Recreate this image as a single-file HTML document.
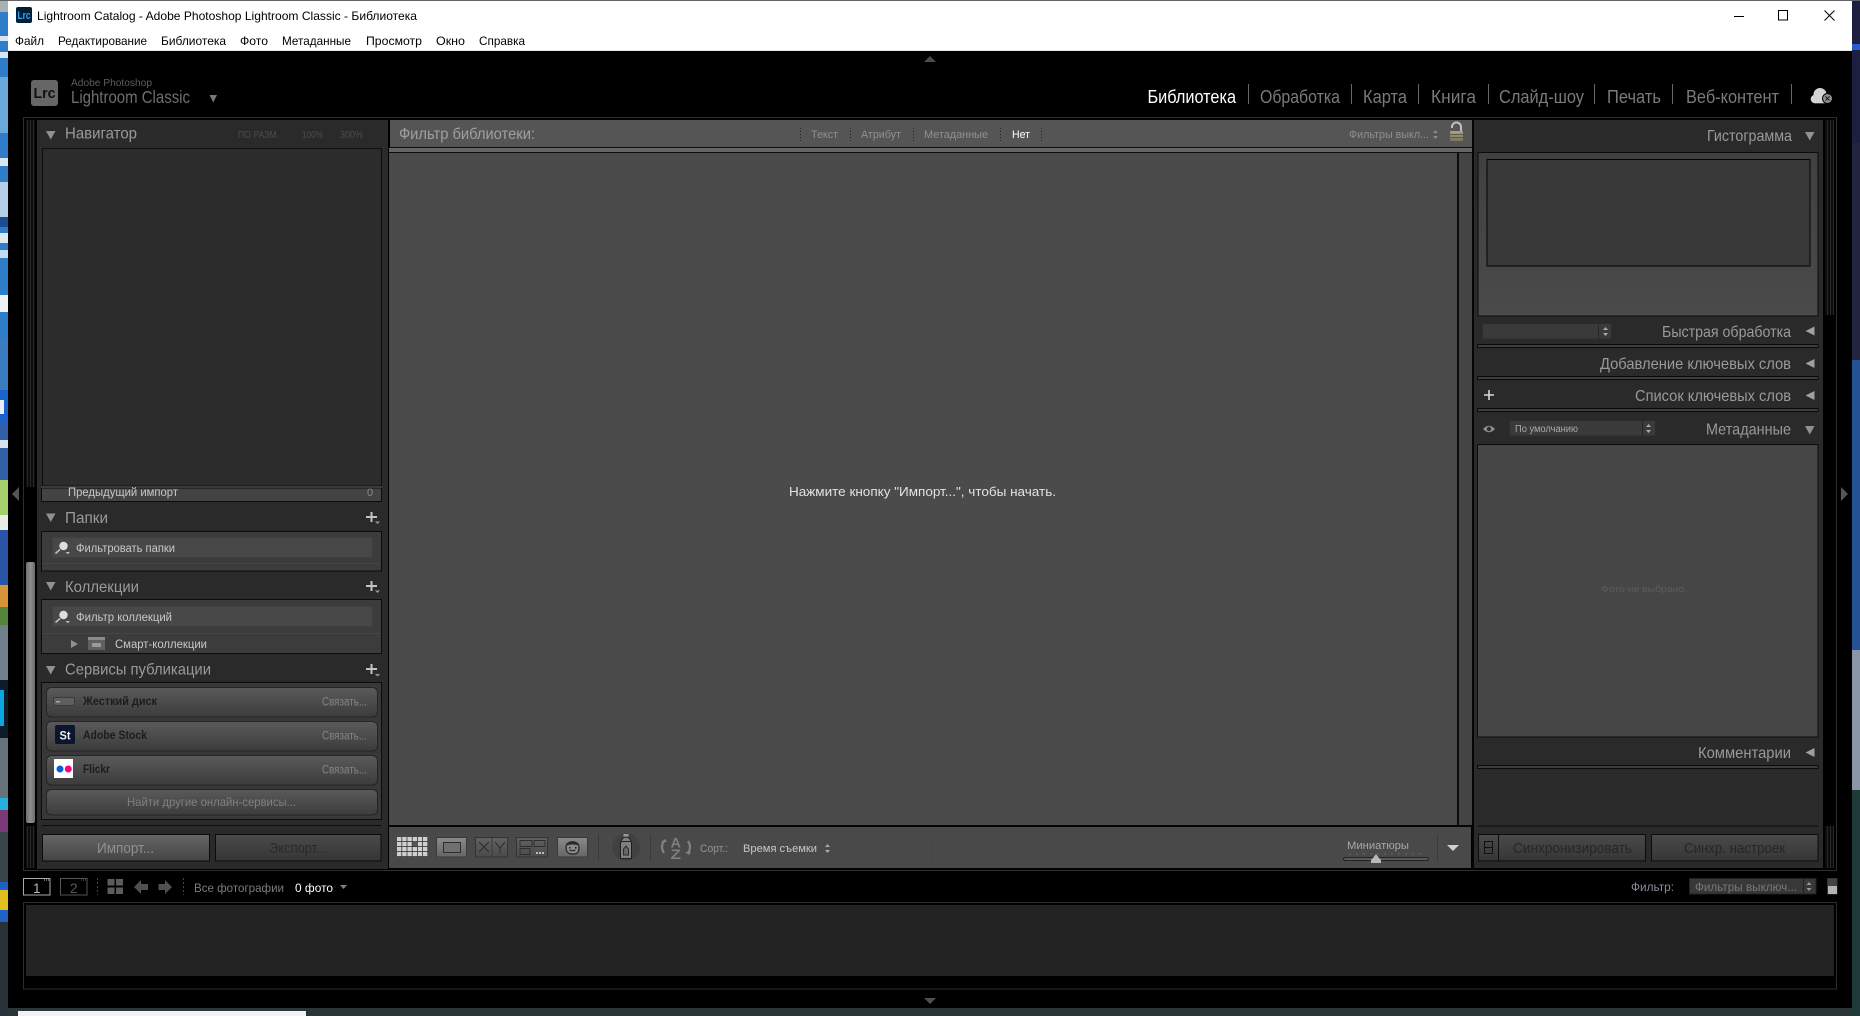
<!DOCTYPE html>
<html lang="ru"><head><meta charset="utf-8"><title>Lightroom Catalog - Adobe Photoshop Lightroom Classic - Библиотека</title>
<style>
html,body{margin:0;padding:0;background:#000;width:1860px;height:1016px;overflow:hidden}
svg{display:block}
text{font-family:"Liberation Sans","DejaVu Sans",sans-serif;white-space:pre}
.m{font-size:12px;fill:#000}
.n{font-size:18px;fill:#7a7a7a}
.h{font-size:16px;fill:#9a9a9a}
.s{font-size:11.5px;fill:#c8c8c8}
.k{font-size:11.500px;fill:#858585}
.d{font-size:12px;fill:#1c1c1c;font-weight:bold}
</style></head><body>
<svg width="1860" height="1016" viewBox="0 0 1860 1016" xmlns="http://www.w3.org/2000/svg">
<defs>
<linearGradient id="btn" x1="0" y1="0" x2="0" y2="1"><stop offset="0" stop-color="#5a5a5a"/><stop offset="1" stop-color="#3c3c3c"/></linearGradient>
<linearGradient id="imp" x1="0" y1="0" x2="0" y2="1"><stop offset="0" stop-color="#666"/><stop offset="1" stop-color="#444"/></linearGradient>
<linearGradient id="exp" x1="0" y1="0" x2="0" y2="1"><stop offset="0" stop-color="#4a4a4a"/><stop offset="1" stop-color="#363636"/></linearGradient>
<linearGradient id="tb" x1="0" y1="0" x2="0" y2="1"><stop offset="0" stop-color="#8a8a8a"/><stop offset="1" stop-color="#666"/></linearGradient>
<linearGradient id="tb2" x1="0" y1="0" x2="0" y2="1"><stop offset="0" stop-color="#626262"/><stop offset="1" stop-color="#4a4a4a"/></linearGradient>
<linearGradient id="thumb" x1="0" y1="0" x2="1" y2="0"><stop offset="0" stop-color="#6e6e6e"/><stop offset=".5" stop-color="#8e8e8e"/><stop offset="1" stop-color="#6a6a6a"/></linearGradient>
<linearGradient id="lock" x1="0" y1="0" x2="0" y2="1"><stop offset="0" stop-color="#a8a488"/><stop offset="1" stop-color="#787458"/></linearGradient>
<pattern id="grip" width="3" height="4" patternUnits="userSpaceOnUse"><rect width="3" height="4" fill="#0c0c0c"/><rect width="1" height="4" fill="#282828"/></pattern>
<linearGradient id="hist" x1="0" y1="0" x2="0" y2="1"><stop offset="0" stop-color="#404040"/><stop offset="1" stop-color="#4a4a4a"/></linearGradient>
</defs>

<!-- desktop strips -->
<rect width="1860" height="1016" fill="#1f2e33"/>
<rect x="0" y="0" width="8" height="340" fill="#2f7cc8"/>
<rect x="0" y="0" width="8" height="12" fill="#a9b0b6"/>
<rect x="0" y="36" width="8" height="5" fill="#d8e6f2"/>
<rect x="0" y="52" width="8" height="6" fill="#d8e6f2"/>
<rect x="0" y="77" width="8" height="56" fill="#6aa8dc"/>
<rect x="0" y="158" width="8" height="8" fill="#d8e6f2"/>
<rect x="0" y="182" width="8" height="35" fill="#b4d0e8"/>
<rect x="0" y="217" width="8" height="10" fill="#1c4c90"/>
<rect x="0" y="233" width="8" height="10" fill="#dce8f2"/>
<rect x="0" y="250" width="8" height="8" fill="#c4dcf0"/>
<rect x="0" y="295" width="8" height="17" fill="#eef2f6"/>
<rect x="0" y="340" width="8" height="50" fill="#3a7cc0"/>
<rect x="0" y="390" width="8" height="34" fill="#1a62cc"/>
<rect x="0" y="400" width="4" height="14" fill="#e8eef4"/>
<rect x="0" y="424" width="8" height="56" fill="#2f5fa4"/>
<rect x="0" y="440" width="8" height="8" fill="#d8e2ee"/>
<rect x="0" y="480" width="8" height="40" fill="#a6cf6e"/>
<rect x="0" y="515" width="8" height="15" fill="#e9efe6"/>
<rect x="0" y="530" width="8" height="55" fill="#2a55a6"/>
<rect x="0" y="585" width="8" height="22" fill="#d8943a"/>
<rect x="0" y="607" width="8" height="18" fill="#55853a"/>
<rect x="0" y="625" width="8" height="55" fill="#72808e"/>
<rect x="0" y="680" width="8" height="58" fill="#0d1b2a"/>
<rect x="0" y="690" width="4" height="36" fill="#0aa7e0"/>
<rect x="0" y="738" width="8" height="60" fill="#66717c"/>
<rect x="0" y="798" width="8" height="12" fill="#27aee0"/>
<rect x="0" y="810" width="8" height="22" fill="#7a3a78"/>
<rect x="0" y="832" width="8" height="50" fill="#39454a"/>
<rect x="0" y="882" width="8" height="40" fill="#1d62c4"/>
<rect x="0" y="890" width="8" height="20" fill="#e0c020"/>
<rect x="0" y="922" width="8" height="94" fill="#283238"/>
<rect x="1852" y="0" width="8" height="143" fill="#1c1f40"/>
<rect x="1852" y="44" width="8" height="6" fill="#2a5ad0"/>
<rect x="1852" y="143" width="8" height="217" fill="#23243f"/>
<rect x="1852" y="360" width="8" height="290" fill="#245294"/>
<rect x="1852" y="650" width="8" height="140" fill="#8a96a8"/>
<rect x="1852" y="790" width="8" height="226" fill="#1e3a38"/>
<rect x="8" y="1008" width="1844" height="8" fill="#2a3538"/>
<rect x="18" y="1011" width="288" height="5" fill="#f2f2f2"/>
<rect x="0" y="0" width="1860" height="1" fill="#606468"/>

<!-- window -->
<rect x="8" y="51" width="1844" height="957" fill="#000"/>
<rect x="8" y="1" width="1844" height="50" fill="#fff"/>
<rect x="8" y="50" width="1844" height="1" fill="#e8e8e8"/>
<rect x="16" y="7" width="16" height="16" rx="2" fill="#001e36"/>
<text x="17.5" y="19" font-size="11" font-weight="bold" fill="#31a8ff" textLength="13" lengthAdjust="spacingAndGlyphs">Lrc</text>
<text x="37" y="20" class="m" textLength="380" lengthAdjust="spacingAndGlyphs">Lightroom Catalog - Adobe Photoshop Lightroom Classic - Библиотека</text>
<text x="15" y="45" class="m" textLength="29" lengthAdjust="spacingAndGlyphs">Файл</text>
<text x="58" y="45" class="m" textLength="89" lengthAdjust="spacingAndGlyphs">Редактирование</text>
<text x="161" y="45" class="m" textLength="65" lengthAdjust="spacingAndGlyphs">Библиотека</text>
<text x="240" y="45" class="m" textLength="28" lengthAdjust="spacingAndGlyphs">Фото</text>
<text x="282" y="45" class="m" textLength="69" lengthAdjust="spacingAndGlyphs">Метаданные</text>
<text x="366" y="45" class="m" textLength="56" lengthAdjust="spacingAndGlyphs">Просмотр</text>
<text x="436" y="45" class="m" textLength="29" lengthAdjust="spacingAndGlyphs">Окно</text>
<text x="479" y="45" class="m" textLength="46" lengthAdjust="spacingAndGlyphs">Справка</text>
<path d="M1734 16.5h10" stroke="#000" stroke-width="1" fill="none"/>
<rect x="1778.5" y="10.5" width="9" height="9.5" fill="none" stroke="#000"/>
<path d="M1824.5 10.5l10 10M1834.5 10.5l-10 10" stroke="#000" fill="none"/>

<!-- top bar -->
<path d="M924 62l6-6 6 6z" fill="#4c4c4c"/>
<rect x="31" y="80" width="27" height="26" rx="3" fill="#666"/>
<text x="33.5" y="98" font-size="15" font-weight="bold" fill="#111" textLength="22" lengthAdjust="spacingAndGlyphs">Lrc</text>
<text x="71" y="86" font-size="10.5" fill="#5e5e5e" textLength="81" lengthAdjust="spacingAndGlyphs">Adobe Photoshop</text>
<text x="71" y="103" font-size="17.5" fill="#6e6e6e" textLength="119" lengthAdjust="spacingAndGlyphs">Lightroom Classic</text>
<path d="M209.5 95h7.500l-3.750 7.500z" fill="#777"/>
<text x="1147.500" y="103" class="n" style="fill:#fff" textLength="88.500" lengthAdjust="spacingAndGlyphs">Библиотека</text>
<text x="1260" y="103" class="n" textLength="80" lengthAdjust="spacingAndGlyphs">Обработка</text>
<text x="1363" y="103" class="n" textLength="44" lengthAdjust="spacingAndGlyphs">Карта</text>
<text x="1431" y="103" class="n" textLength="45" lengthAdjust="spacingAndGlyphs">Книга</text>
<text x="1499" y="103" class="n" textLength="85" lengthAdjust="spacingAndGlyphs">Слайд-шоу</text>
<text x="1607" y="103" class="n" textLength="54" lengthAdjust="spacingAndGlyphs">Печать</text>
<text x="1686" y="103" class="n" textLength="93" lengthAdjust="spacingAndGlyphs">Веб-контент</text>
<path d="M1248.500 84v20M1351.500 84v20M1418.500 84v20M1488.500 84v20M1594.500 84v20M1672.500 84v20M1791.500 84v20" stroke="#666" fill="none"/>
<circle cx="1820" cy="94.500" r="6.500" fill="#d4d4d4"/><circle cx="1815" cy="99" r="4.300" fill="#d4d4d4"/><rect x="1815" y="97" width="12" height="6.300" fill="#d4d4d4"/>
<circle cx="1827.500" cy="98.500" r="5" fill="#8e8e8e" stroke="#000"/>
<path d="M1825.500 96.500l4 4M1829.500 96.500l-4 4" stroke="#1c1c1c" fill="none"/>

<!-- main frame -->
<rect x="23.500" y="117.500" width="1813" height="753" fill="#000" stroke="#2e2e2e"/>

<!-- left panel -->
<rect x="26" y="120" width="9" height="367" fill="url(#grip)"/>
<rect x="26" y="562" width="9" height="261" rx="2" fill="url(#thumb)"/>
<rect x="26" y="826" width="9" height="42" fill="url(#grip)"/>
<path d="M19 487v14l-7-7z" fill="#555"/>
<rect x="37" y="120" width="351.500" height="749" fill="#2a2a2a"/>
<rect x="388" y="119" width="2" height="751" fill="#000"/>
<path d="M46 131h9.500l-4.750 8.500z" fill="#919191"/>
<text x="65" y="138.500" class="h" textLength="72" lengthAdjust="spacingAndGlyphs">Навигатор</text>
<text x="238" y="138" font-size="10" fill="#4c4c4c" textLength="41" lengthAdjust="spacingAndGlyphs">ПО РАЗМ.</text>
<text x="302" y="138" font-size="10" fill="#4c4c4c" textLength="21" lengthAdjust="spacingAndGlyphs">100%</text>
<text x="340" y="138" font-size="10" fill="#4c4c4c" textLength="23" lengthAdjust="spacingAndGlyphs">300%</text>
<rect x="42.500" y="148.500" width="339" height="337.500" fill="#2c2c2c" stroke="#0e0e0e"/>
<rect x="41.500" y="488" width="340" height="13.500" fill="#434343" stroke="#0c0c0c" stroke-width="1"/>
<rect x="41" y="486" width="341" height="2" fill="#3a3a3a"/>
<text x="68" y="496" class="s" textLength="110" lengthAdjust="spacingAndGlyphs">Предыдущий импорт</text>
<text x="367" y="496" font-size="11" fill="#8a8a8a">0</text>

<!-- folders -->
<path d="M46 513.500h9.500l-4.750 8.500z" fill="#919191"/>
<text x="65" y="523" class="h" textLength="43" lengthAdjust="spacingAndGlyphs">Папки</text>
<path d="M371.500 512v10M366 517h11" stroke="#c4c4c4" stroke-width="2" fill="none"/>
<path d="M375 521.500h5l-2.500 2.500z" fill="#999"/>
<rect x="41.500" y="531.500" width="340" height="39.500" fill="#3c3c3c" stroke="#0c0c0c"/>
<rect x="52.500" y="537.500" width="319.500" height="20" fill="#484848" stroke="#404040"/>
<circle cx="63.500" cy="546" r="4.200" fill="#ddd"/><path d="M60 549.500l-4.500 4" stroke="#bbb" stroke-width="1.700" fill="none"/>
<path d="M65.500 552h4.500l-2.250 2.250z" fill="#bbb"/>
<text x="76" y="552" class="s" textLength="99" lengthAdjust="spacingAndGlyphs">Фильтровать папки</text>
<path d="M42 563.500h339" stroke="#454545" fill="none"/>

<!-- collections -->
<path d="M46 582h9.500l-4.750 8.500z" fill="#919191"/>
<text x="65" y="592" class="h" textLength="74" lengthAdjust="spacingAndGlyphs">Коллекции</text>
<path d="M371.500 581v10M366 586h11" stroke="#c4c4c4" stroke-width="2" fill="none"/>
<path d="M375 590.500h5l-2.500 2.500z" fill="#999"/>
<rect x="41.500" y="599.500" width="340" height="54" fill="#3c3c3c" stroke="#0c0c0c"/>
<rect x="52.500" y="606.500" width="319.500" height="20" fill="#484848" stroke="#404040"/>
<circle cx="63.500" cy="615" r="4.200" fill="#ddd"/><path d="M60 618.500l-4.500 4" stroke="#bbb" stroke-width="1.700" fill="none"/>
<path d="M65.500 621h4.500l-2.250 2.250z" fill="#bbb"/>
<text x="76" y="621" class="s" textLength="96" lengthAdjust="spacingAndGlyphs">Фильтр коллекций</text>
<path d="M42 633.500h339" stroke="#464646" fill="none"/>
<path d="M71 640v8l7-4z" fill="#909090"/>
<rect x="88" y="637" width="17" height="4" fill="#8a8a8a"/><rect x="88" y="640" width="17" height="10" fill="#606060"/><rect x="92" y="643" width="9" height="4" fill="#9a9a9a"/>
<text x="115" y="648" class="s" textLength="92" lengthAdjust="spacingAndGlyphs">Смарт-коллекции</text>

<!-- publish services -->
<path d="M46 666h9.500l-4.750 8.500z" fill="#919191"/>
<text x="65" y="674.500" class="h" textLength="146" lengthAdjust="spacingAndGlyphs">Сервисы публикации</text>
<path d="M371.500 664v10M366 669h11" stroke="#c4c4c4" stroke-width="2" fill="none"/>
<path d="M375 674h5l-2.500 2.500z" fill="#999"/>
<rect x="41.500" y="682.500" width="340" height="137" fill="#383838" stroke="#0c0c0c"/>
<rect x="46.500" y="687.500" width="331" height="29.500" rx="5" fill="url(#btn)" stroke="#252525"/>
<rect x="46.500" y="721.500" width="331" height="29.500" rx="5" fill="url(#btn)" stroke="#252525"/>
<rect x="46.500" y="755.500" width="331" height="29.500" rx="5" fill="url(#btn)" stroke="#252525"/>
<rect x="46.500" y="789.500" width="331" height="25.500" rx="5" fill="url(#btn)" stroke="#252525"/>
<rect x="53.500" y="697.500" width="21" height="8" rx="1.500" fill="#5e5e5e" stroke="#3a3a3a"/><rect x="56" y="701" width="4" height="1.500" fill="#aaa"/>
<text x="83" y="705" class="d" textLength="74" lengthAdjust="spacingAndGlyphs">Жесткий диск</text>
<text x="322" y="705.500" class="k" textLength="45" lengthAdjust="spacingAndGlyphs">Связать...</text>
<rect x="55" y="725" width="20" height="19" rx="2" fill="#0a1530"/>
<text x="59.500" y="739.500" font-size="12" font-weight="bold" fill="#eee" textLength="11" lengthAdjust="spacingAndGlyphs">St</text>
<text x="83" y="739" class="d" textLength="64" lengthAdjust="spacingAndGlyphs">Adobe Stock</text>
<text x="322" y="739.500" class="k" textLength="45" lengthAdjust="spacingAndGlyphs">Связать...</text>
<rect x="54" y="759" width="19" height="19" fill="#fff"/>
<circle cx="60" cy="769" r="3.500" fill="#0063dc"/><circle cx="68.300" cy="769" r="3.500" fill="#ff0084"/>
<text x="83" y="773" class="d" textLength="27" lengthAdjust="spacingAndGlyphs">Flickr</text>
<text x="322" y="773.500" class="k" textLength="45" lengthAdjust="spacingAndGlyphs">Связать...</text>
<text x="127" y="806" font-size="12" fill="#808080" textLength="169" lengthAdjust="spacingAndGlyphs">Найти другие онлайн-сервисы...</text>
<path d="M42 825.500h339" stroke="#0c0c0c" fill="none"/>
<rect x="42.500" y="834.500" width="167" height="26.500" fill="url(#imp)" stroke="#0c0c0c"/>
<rect x="215.500" y="834.500" width="165.500" height="26.500" fill="url(#exp)" stroke="#0c0c0c"/>
<text x="97" y="853" font-size="15" fill="#909090" textLength="57" lengthAdjust="spacingAndGlyphs">Импорт...</text>
<text x="269" y="853" font-size="15" fill="#2a2a2a" textLength="58" lengthAdjust="spacingAndGlyphs">Экспорт...</text>

<!-- center -->
<rect x="390" y="120" width="1082" height="27" fill="#555"/>
<rect x="389" y="147" width="1083" height="1" fill="#0e0e0e"/>
<rect x="389" y="148" width="1083" height="4" fill="#666"/>
<rect x="389" y="152" width="1083" height="1" fill="#0e0e0e"/>
<rect x="389" y="153" width="1068" height="672" fill="#4b4b4b"/>
<rect x="1457" y="153" width="2" height="672" fill="#0c0c0c"/>
<rect x="1459" y="153" width="13" height="672" fill="#444"/>
<rect x="389" y="825" width="1083" height="2" fill="#050505"/>
<rect x="389" y="827" width="1082" height="41" fill="#494949"/>
<text x="399" y="139" class="h" style="fill:#a0a0a0" textLength="136" lengthAdjust="spacingAndGlyphs">Фильтр библиотеки:</text>
<text x="811" y="138" font-size="11" fill="#909090" textLength="27" lengthAdjust="spacingAndGlyphs">Текст</text>
<text x="861" y="138" font-size="11" fill="#909090" textLength="40" lengthAdjust="spacingAndGlyphs">Атрибут</text>
<text x="924" y="138" font-size="11" fill="#909090" textLength="64" lengthAdjust="spacingAndGlyphs">Метаданные</text>
<text x="1012" y="138" font-size="11" fill="#fff" textLength="18" lengthAdjust="spacingAndGlyphs">Нет</text>
<path d="M800.500 128v14M850.500 128v14M913.500 128v14M1000.500 128v14M1041.500 128v14" stroke="#222" stroke-dasharray="1 2" fill="none"/>
<text x="1349" y="138" font-size="11" fill="#909090" textLength="80" lengthAdjust="spacingAndGlyphs">Фильтры выкл...</text>
<path d="M1433 133l2.500-3 2.500 3zM1433 136l2.500 3 2.500-3z" fill="#8a8a8a"/>
<path d="M1452 128v-1a4.500 4.500 0 0 1 9 0v5" fill="none" stroke="#c0c0c0" stroke-width="2"/>
<rect x="1450" y="131" width="13" height="10" rx="1" fill="url(#lock)"/>
<path d="M1450 134.500h13M1450 137.500h13" stroke="#5e5a44" fill="none"/>
<text x="789" y="496" font-size="13" fill="#e2e2e2" textLength="267" lengthAdjust="spacingAndGlyphs">Нажмите кнопку "Импорт...", чтобы начать.</text>

<!-- toolbar -->
<rect x="397" y="837" width="31" height="20" fill="#333"/>
<g fill="#cfcfcf">
<rect x="397" y="837" width="4.400" height="4.200"/><rect x="402.200" y="837" width="4.400" height="4.200"/><rect x="407.400" y="837" width="4.400" height="4.200"/><rect x="412.600" y="837" width="4.400" height="4.200"/><rect x="417.800" y="837" width="4.400" height="4.200"/><rect x="423" y="837" width="4.400" height="4.200"/>
<rect x="397" y="842" width="4.400" height="4.200"/><rect x="402.200" y="842" width="4.400" height="4.200"/><rect x="407.400" y="842" width="4.400" height="4.200"/><rect x="412.600" y="842" width="4.400" height="4.200" fill="#555"/><rect x="417.800" y="842" width="4.400" height="4.200"/><rect x="423" y="842" width="4.400" height="4.200"/>
<rect x="397" y="847" width="4.400" height="4.200"/><rect x="402.200" y="847" width="4.400" height="4.200"/><rect x="407.400" y="847" width="4.400" height="4.200"/><rect x="412.600" y="847" width="4.400" height="4.200"/><rect x="417.800" y="847" width="4.400" height="4.200"/><rect x="423" y="847" width="4.400" height="4.200"/>
<rect x="397" y="852" width="4.400" height="4.200"/><rect x="402.200" y="852" width="4.400" height="4.200"/><rect x="407.400" y="852" width="4.400" height="4.200"/><rect x="412.600" y="852" width="4.400" height="4.200"/><rect x="417.800" y="852" width="4.400" height="4.200"/><rect x="423" y="852" width="4.400" height="4.200"/>
</g>
<rect x="436.500" y="837.500" width="30" height="19.500" fill="url(#tb)" stroke="#3a3a3a"/>
<rect x="443.500" y="842.500" width="17" height="10" fill="#707070" stroke="#2e2e2e"/>
<rect x="475.500" y="837.500" width="32" height="19.500" fill="url(#tb2)" stroke="#333"/>
<path d="M492 838v19" stroke="#3a3a3a" fill="none"/>
<path d="M479 842l10 10M489 842l-10 10" stroke="#2b2b2b" fill="none"/>
<path d="M495 842l5 6 5-6M500 848v5" stroke="#2b2b2b" fill="none"/>
<rect x="516.500" y="837.500" width="31" height="19.500" fill="url(#tb2)" stroke="#333"/>
<path d="M520 840.500h12v6h-12zM534 840.500h11v6h-11zM520 848.500h10v6h-10z" fill="none" stroke="#2e2e2e"/>
<rect x="536" y="852" width="2" height="2" fill="#bbb"/><rect x="539" y="852" width="2" height="2" fill="#bbb"/><rect x="542" y="852" width="2" height="2" fill="#bbb"/>
<rect x="557.500" y="837.500" width="30" height="19.500" fill="url(#tb)" stroke="#3a3a3a"/>
<path d="M566 847c0-7 13-7 13 0s-3 7-6.500 7-6.500-1-6.500-7z" fill="#8a8a8a" stroke="#222" stroke-width="1.200"/>
<path d="M566 846c2-5 11-5 13 0-3-2-10-2-13 0z" fill="#2c2c2c"/>
<path d="M569.500 850q3 1.500 6 0" stroke="#222" fill="none"/>
<rect x="569" y="847" width="1.500" height="1.500" fill="#222"/><rect x="575" y="847" width="1.500" height="1.500" fill="#222"/>
<path d="M598.500 834v27M650.500 834v27" stroke="#3a3a3a" fill="none"/>
<circle cx="626" cy="847" r="14" fill="#414141"/>
<rect x="623.500" y="834" width="5" height="3" fill="#999"/>
<path d="M620.500 844c0-4 2.500-7 5.500-7s5.500 3 5.500 7v14.500h-11z" fill="#808080" stroke="#1e1e1e"/>
<path d="M621 841.500h10" stroke="#222" fill="none"/>
<path d="M623.500 849l2.500-3 2.500 3v6h-5z" fill="#666" stroke="#2a2a2a"/>
<text x="670.500" y="847.500" font-size="14" font-weight="bold" fill="#7e7e7e" textLength="10.500" lengthAdjust="spacingAndGlyphs">A</text>
<text x="670.500" y="859" font-size="14" font-weight="bold" fill="#7e7e7e" textLength="10.500" lengthAdjust="spacingAndGlyphs">Z</text>
<path d="M664 841q-4 6 0 12M688 841q4 6 0 12" stroke="#808080" stroke-width="2.200" fill="none"/>
<path d="M661 842h6l-2-3zM685 852h6l-2 3z" fill="#808080"/>
<text x="700" y="852" font-size="11" fill="#8b949c" textLength="28" lengthAdjust="spacingAndGlyphs">Сорт.:</text>
<text x="743" y="852" font-size="11" fill="#c4c8cc" textLength="74" lengthAdjust="spacingAndGlyphs">Время съемки</text>
<path d="M825 847l2.500-3 2.500 3zM825 850l2.500 3 2.500-3z" fill="#aaa"/>
<path d="M931.500 836v26" stroke="#444" fill="none"/>
<text x="1347" y="849" font-size="11" fill="#a8a8a8" textLength="62" lengthAdjust="spacingAndGlyphs">Миниатюры</text>
<path d="M1350 853v2M1357 853v2M1364 853v2M1371 853v2M1378 853v2M1385 853v2M1392 853v2M1399 853v2M1406 853v2M1413 853v2M1420 853v2" stroke="#666" fill="none"/>
<rect x="1343.500" y="857.500" width="85" height="3" rx="1.500" fill="#5a5a5a" stroke="#222"/>
<path d="M1376 854l3 4 2 2v3h-10v-3l2-2z" fill="#b8b8b8"/>
<path d="M1437.500 834v28" stroke="#3a3a3a" fill="none"/>
<path d="M1447 845h12l-6 6z" fill="#cfcfcf"/>

<!-- right panel -->
<rect x="1472" y="119" width="2" height="751" fill="#050505"/>
<rect x="1474" y="120" width="349" height="748" fill="#2a2a2a"/>
<rect x="1825" y="120" width="9" height="195" fill="url(#grip)"/>
<rect x="1825" y="826" width="9" height="42" fill="url(#grip)"/>
<path d="M1841 487v14l7-7z" fill="#555"/>
<text x="1707" y="141" class="h" textLength="85" lengthAdjust="spacingAndGlyphs">Гистограмма</text>
<path d="M1805 132h9.500l-4.750 8.500z" fill="#919191"/>
<rect x="1478" y="152.500" width="340" height="163.500" fill="url(#hist)" stroke="#0c0c0c"/>
<rect x="1487" y="159.500" width="323" height="106.500" fill="#383838" stroke="#050505"/>
<rect x="1482.500" y="323.500" width="129" height="15.500" fill="#3a3a3a" stroke="#2c2c2c"/>
<path d="M1598.500 324v15" stroke="#262626" fill="none"/>
<path d="M1603 330l2.500-3 2.500 3zM1603 333l2.500 3 2.500-3z" fill="#aaa"/>
<text x="1662" y="337" class="h" textLength="129" lengthAdjust="spacingAndGlyphs">Быстрая обработка</text>
<path d="M1814.500 326.500v9l-9-4.500z" fill="#a0a0a0"/>
<rect x="1477.500" y="344.500" width="340.500" height="3" fill="#3e3e3e" stroke="#0a0a0a"/>
<text x="1600" y="369" class="h" textLength="191" lengthAdjust="spacingAndGlyphs">Добавление ключевых слов</text>
<path d="M1814.500 359v9l-9-4.500z" fill="#a0a0a0"/>
<rect x="1477.500" y="376.500" width="340.500" height="3" fill="#3e3e3e" stroke="#0a0a0a"/>
<path d="M1489 390v10M1484 395h10" stroke="#d8d8d8" stroke-width="1.600" fill="none"/>
<text x="1635" y="401" class="h" textLength="156" lengthAdjust="spacingAndGlyphs">Список ключевых слов</text>
<path d="M1814.500 391v9l-9-4.500z" fill="#a0a0a0"/>
<rect x="1477.500" y="408.500" width="340.500" height="3" fill="#3e3e3e" stroke="#0a0a0a"/>
<path d="M1483 429q6-6.500 12 0q-6 6.500-12 0z" fill="#8f8f8f"/><circle cx="1489" cy="429" r="2.200" fill="#2e2e2e"/>
<rect x="1509.500" y="420.500" width="146" height="15.500" fill="#3a3a3a" stroke="#2c2c2c"/>
<path d="M1642.500 421v15" stroke="#262626" fill="none"/>
<path d="M1646 427l2.500-3 2.500 3zM1646 430l2.500 3 2.500-3z" fill="#aaa"/>
<text x="1515" y="432" font-size="10" fill="#aaa" textLength="63" lengthAdjust="spacingAndGlyphs">По умолчанию</text>
<text x="1706" y="434.500" class="h" textLength="85" lengthAdjust="spacingAndGlyphs">Метаданные</text>
<path d="M1805 426h9.500l-4.750 8.500z" fill="#919191"/>
<rect x="1477.500" y="444.500" width="340.500" height="292.500" fill="#464646" stroke="#0c0c0c"/>
<text x="1601" y="592" font-size="9.500" fill="#5c5c5c" textLength="86" lengthAdjust="spacingAndGlyphs">Фото не выбрано.</text>
<text x="1698" y="758" class="h" textLength="93" lengthAdjust="spacingAndGlyphs">Комментарии</text>
<path d="M1814.500 748v9l-9-4.500z" fill="#a0a0a0"/>
<rect x="1477.500" y="765.500" width="340.500" height="3" fill="#3e3e3e" stroke="#0a0a0a"/>
<path d="M1478 826h340" stroke="#0c0c0c" fill="none"/>
<rect x="1478.500" y="834.500" width="167" height="26.500" fill="url(#exp)" stroke="#0c0c0c"/>
<path d="M1498.500 835v26" stroke="#0c0c0c" fill="none"/>
<rect x="1484.500" y="841.500" width="8" height="12" fill="none" stroke="#111"/><path d="M1485 847.500h7" stroke="#111" fill="none"/>
<text x="1513" y="853" font-size="15" fill="#262626" textLength="119" lengthAdjust="spacingAndGlyphs">Синхронизировать</text>
<rect x="1651.500" y="834.500" width="166.500" height="26.500" fill="url(#exp)" stroke="#0c0c0c"/>
<text x="1684" y="853" font-size="15" fill="#262626" textLength="101" lengthAdjust="spacingAndGlyphs">Синхр. настроек</text>

<!-- secondary bar -->
<rect x="23.500" y="878.500" width="26.500" height="16.500" fill="#000" stroke="#aaa"/>
<path d="M44 880h1M46 880h1M48 880h1" stroke="#ccc" fill="none"/>
<text x="33" y="893" font-size="13.500" fill="#b8b8b8">1</text>
<rect x="60.500" y="878.500" width="26.500" height="16.500" fill="#000" stroke="#555"/>
<path d="M81 880h1M83 880h1M85 880h1" stroke="#666" fill="none"/>
<text x="70" y="893" font-size="13.500" fill="#585858">2</text>
<path d="M97.500 878v17M183.500 878v17" stroke="#444" stroke-dasharray="2 2" fill="none"/>
<g fill="#5c5c5c"><rect x="107.500" y="879" width="7" height="6.500"/><rect x="116" y="879" width="7" height="6.500"/><rect x="107.500" y="887.500" width="7" height="6.500"/><rect x="116" y="887.500" width="7" height="6.500"/></g>
<path d="M134 887l7-7v4h7v6h-7v4z" fill="#505050"/>
<path d="M172 887l-7-7v4h-6.500v6h6.500v4z" fill="#505050"/>
<text x="194" y="892" font-size="12" fill="#7c7c7c" textLength="90" lengthAdjust="spacingAndGlyphs">Все фотографии</text>
<text x="295" y="892" font-size="12" fill="#fff" textLength="38" lengthAdjust="spacingAndGlyphs">0 фото</text>
<path d="M340 885h7l-3.500 4z" fill="#808080"/>
<text x="1631" y="891" font-size="11.500" fill="#8a8e9a" textLength="43" lengthAdjust="spacingAndGlyphs">Фильтр:</text>
<rect x="1689.500" y="878.500" width="126.500" height="15.500" fill="#383838" stroke="#222"/>
<path d="M1803.500 879v15" stroke="#222" fill="none"/>
<path d="M1806.500 885l2.500-3 2.500 3zM1806.500 888l2.500 3 2.500-3z" fill="#999"/>
<text x="1695" y="891" font-size="11.500" fill="#787878" textLength="102" lengthAdjust="spacingAndGlyphs">Фильтры выключ...</text>
<rect x="1827.500" y="878.500" width="9.500" height="15.500" fill="#444" stroke="#333"/>
<rect x="1828" y="886" width="9" height="8" fill="#b4b4b4"/>

<!-- filmstrip -->
<rect x="23.500" y="902.500" width="1813" height="86.500" fill="#000" stroke="#2c2c2c"/>
<rect x="26" y="905" width="1808" height="71" fill="#222"/>
<path d="M924 998h12l-6 6z" fill="#505050"/>
</svg>
</body></html>
